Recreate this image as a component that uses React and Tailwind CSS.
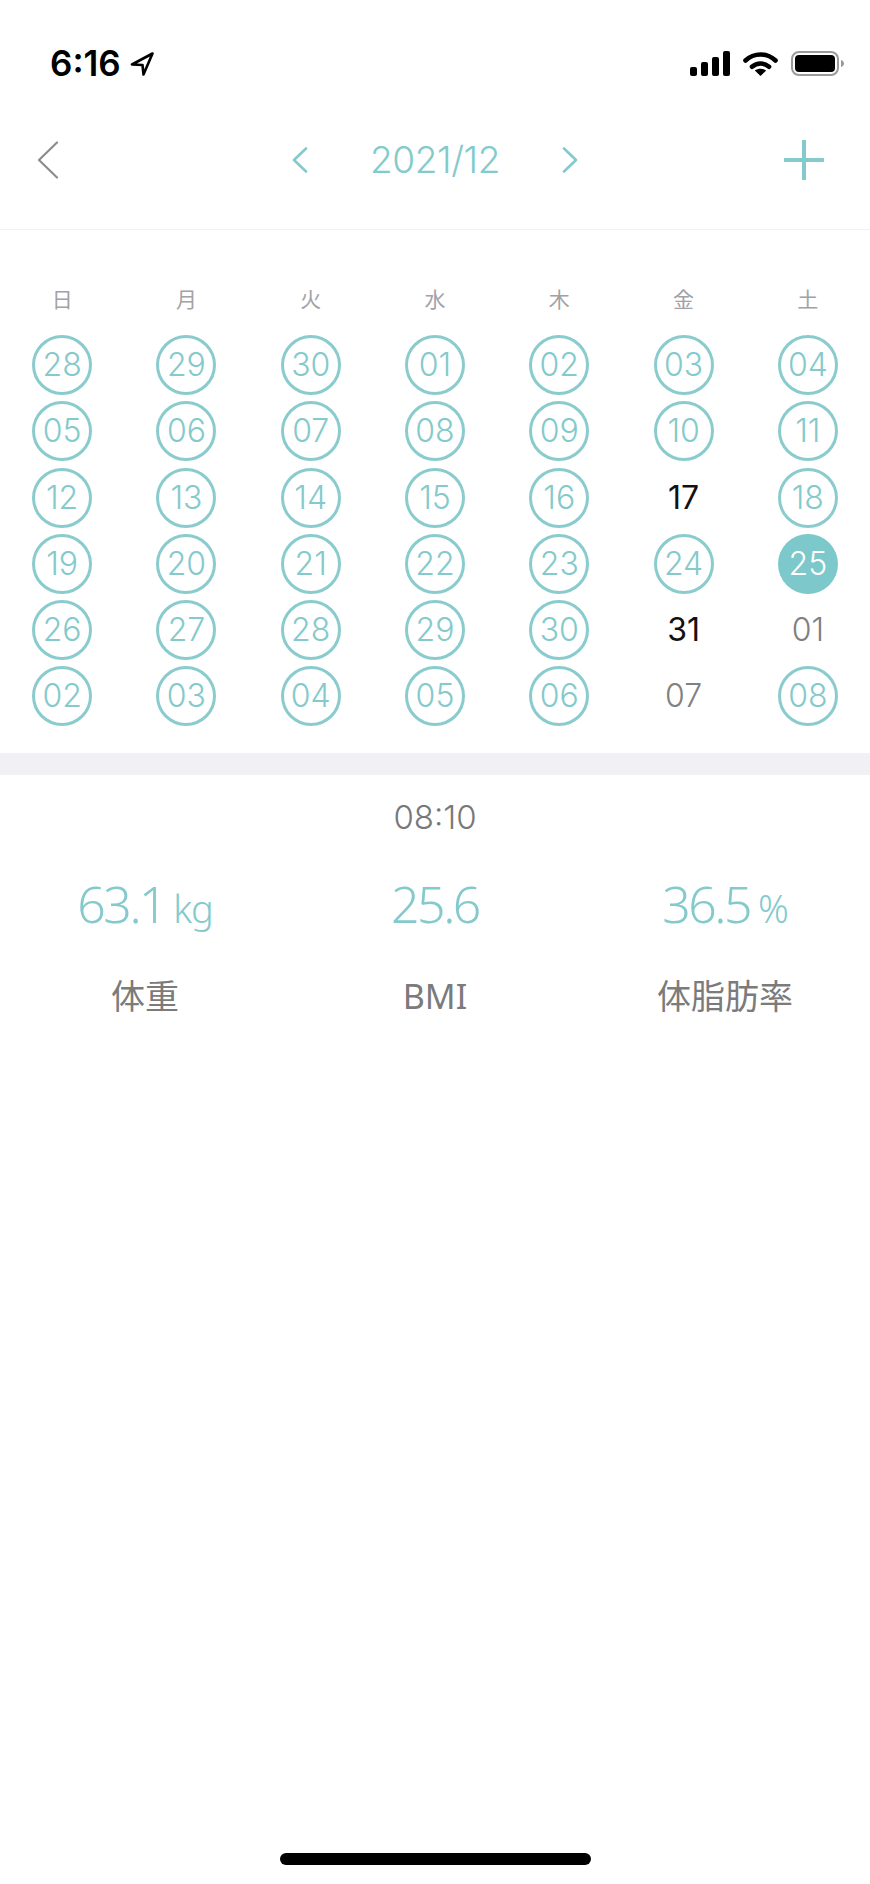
import React from "react";

const weekdays = ["日", "月", "火", "水", "木", "金", "土"];

// kind: c = circled, s = selected, b = black, g = gray
const days = [
  ["28", "c"], ["29", "c"], ["30", "c"], ["01", "c"], ["02", "c"], ["03", "c"], ["04", "c"],
  ["05", "c"], ["06", "c"], ["07", "c"], ["08", "c"], ["09", "c"], ["10", "c"], ["11", "c"],
  ["12", "c"], ["13", "c"], ["14", "c"], ["15", "c"], ["16", "c"], ["17", "b"], ["18", "c"],
  ["19", "c"], ["20", "c"], ["21", "c"], ["22", "c"], ["23", "c"], ["24", "c"], ["25", "s"],
  ["26", "c"], ["27", "c"], ["28", "c"], ["29", "c"], ["30", "c"], ["31", "b"], ["01", "g"],
  ["02", "c"], ["03", "c"], ["04", "c"], ["05", "c"], ["06", "c"], ["07", "g"], ["08", "c"],
];

const dayClass = {
  c: "border-[3px] border-[#8accce] text-[#84cacc] font-[350]",
  s: "bg-[#7cc8cb] text-white font-[350]",
  b: "text-[#111] font-normal",
  g: "text-[#808080] font-[350]",
};

const stats = [
  { value: "63.1", unit: "kg", label: "体重" },
  { value: "25.6", unit: "", label: "BMI" },
  { value: "36.5", unit: "%", label: "体脂肪率" },
];

function StatusIcons() {
  return (
    <div className="flex items-center">
      <svg width="40" height="25" viewBox="0 0 40 25" fill="#000">
        <rect x="0" y="16" width="7" height="9" rx="2" />
        <rect x="11" y="11" width="7" height="14" rx="2" />
        <rect x="22" y="6" width="7" height="19" rx="2" />
        <rect x="33" y="0" width="7" height="25" rx="2" />
      </svg>
      <svg className="ml-[13px]" width="35" height="25" viewBox="0 0 35 25">
        <path d="M2.5 9.5C11 1.5 24 1.5 32.5 9.5" fill="none" stroke="#000" strokeWidth="4.6" strokeLinecap="round" />
        <path d="M9 15.8C14 11.4 21 11.4 26 15.8" fill="none" stroke="#000" strokeWidth="4.6" strokeLinecap="round" />
        <path d="M17.5 25L11.8 19.6C15 17 20 17 23.2 19.6Z" fill="#000" />
      </svg>
      <svg className="ml-[13px]" width="53" height="25" viewBox="0 0 53 25">
        <rect x="1" y="1" width="46" height="23" rx="7" fill="none" stroke="#9a9a9a" strokeWidth="2" />
        <rect x="4" y="4" width="40" height="17" rx="4" fill="#000" />
        <path d="M50 9C52 9.6 53 11 53 12.5C53 14 52 15.4 50 16Z" fill="#9a9a9a" />
      </svg>
    </div>
  );
}

export default function App() {
  return (
    <div className="flex h-[1884px] w-[870px] flex-col bg-white font-['Inter','Noto_Sans_CJK_JP',sans-serif]">
      {/* Status bar */}
      <div className="flex h-[90px] items-center justify-between pl-[50px] pr-[26px] pt-[37px]">
        <div className="flex items-center">
          <span className="text-[35px] font-semibold leading-none text-black">6:16</span>
          <svg className="ml-[9px]" width="24" height="24" viewBox="0 0 24 24" fill="none" stroke="#000" strokeWidth="2.6" strokeLinejoin="round">
            <path d="M22.5 1.5L2 12.5L12.5 13L13.5 22.5Z" />
          </svg>
        </div>
        <StatusIcons />
      </div>

      {/* Nav */}
      <div className="grid h-[140px] grid-cols-[1fr_auto_1fr] items-center border-b border-[#f2f2f4] px-[37px]">
        <svg width="22" height="38" viewBox="0 0 22 38" fill="none" stroke="#8c8c8c" strokeWidth="2.2" strokeLinecap="round" strokeLinejoin="round">
          <path d="M20 1.5L2 19L20 36.5" />
        </svg>
        <div className="flex items-center gap-[62px]">
          <svg width="16" height="26" viewBox="0 0 16 26" fill="none" stroke="#84cacc" strokeWidth="2.6" strokeLinecap="round" strokeLinejoin="round">
            <path d="M14 1.5L2 13L14 24.5" />
          </svg>
          <span className="text-[37px] font-[350] leading-none tracking-[-0.4px] text-[#84cacc]">2021/12</span>
          <svg width="16" height="26" viewBox="0 0 16 26" fill="none" stroke="#84cacc" strokeWidth="2.6" strokeLinecap="round" strokeLinejoin="round">
            <path d="M2 1.5L14 13L2 24.5" />
          </svg>
        </div>
        <svg className="mr-[9px] justify-self-end" width="40" height="40" viewBox="0 0 40 40" stroke="#84cacc" strokeWidth="4">
          <path d="M20 0V40M0 20H40" />
        </svg>
      </div>

      {/* Calendar */}
      <div className="pb-[23px] pt-[50px]">
        <div className="mb-[13px] grid h-[39px] grid-cols-7">
          {weekdays.map((d) => (
            <div key={d} className="flex items-center justify-center text-[21px] text-[#a2a2a6]">{d}</div>
          ))}
        </div>
        <div className="grid auto-rows-[66.25px] grid-cols-7">
          {days.map(([n, kind], i) => (
            <div key={i} className="flex items-center justify-center">
              <div className={`flex h-[60px] w-[60px] items-center justify-center rounded-full text-[32px] leading-none ${dayClass[kind]}`}>{n}</div>
            </div>
          ))}
        </div>
      </div>

      <div className="h-[22px] bg-[#f0f0f5]" />

      {/* Measurement */}
      <div className="pt-[24px] text-center text-[33px] font-[350] leading-[36px] text-[#787878]">08:10</div>
      <div className="mt-[39px] grid grid-cols-3 font-['Noto_Sans','Noto_Sans_CJK_JP',sans-serif]">
        {stats.map((s) => (
          <div key={s.label} className="flex flex-col items-center">
            <div className="flex h-[60px] items-baseline text-[#84cacc]">
              <span className="text-[50px] font-[350] leading-[60px] tracking-[-2.5px]">{s.value}</span>
              {s.unit && <span className="ml-[8px] text-[38px] font-light leading-none tracking-[-1px]">{s.unit}</span>}
            </div>
            <div className="mt-[39px] text-[34px] font-normal leading-[46px] text-[#7b7b7b]">{s.label}</div>
          </div>
        ))}
      </div>

      {/* Home indicator */}
      <div className="mb-[19px] mt-auto h-[12px] w-[311px] self-center rounded-full bg-black" />
    </div>
  );
}
